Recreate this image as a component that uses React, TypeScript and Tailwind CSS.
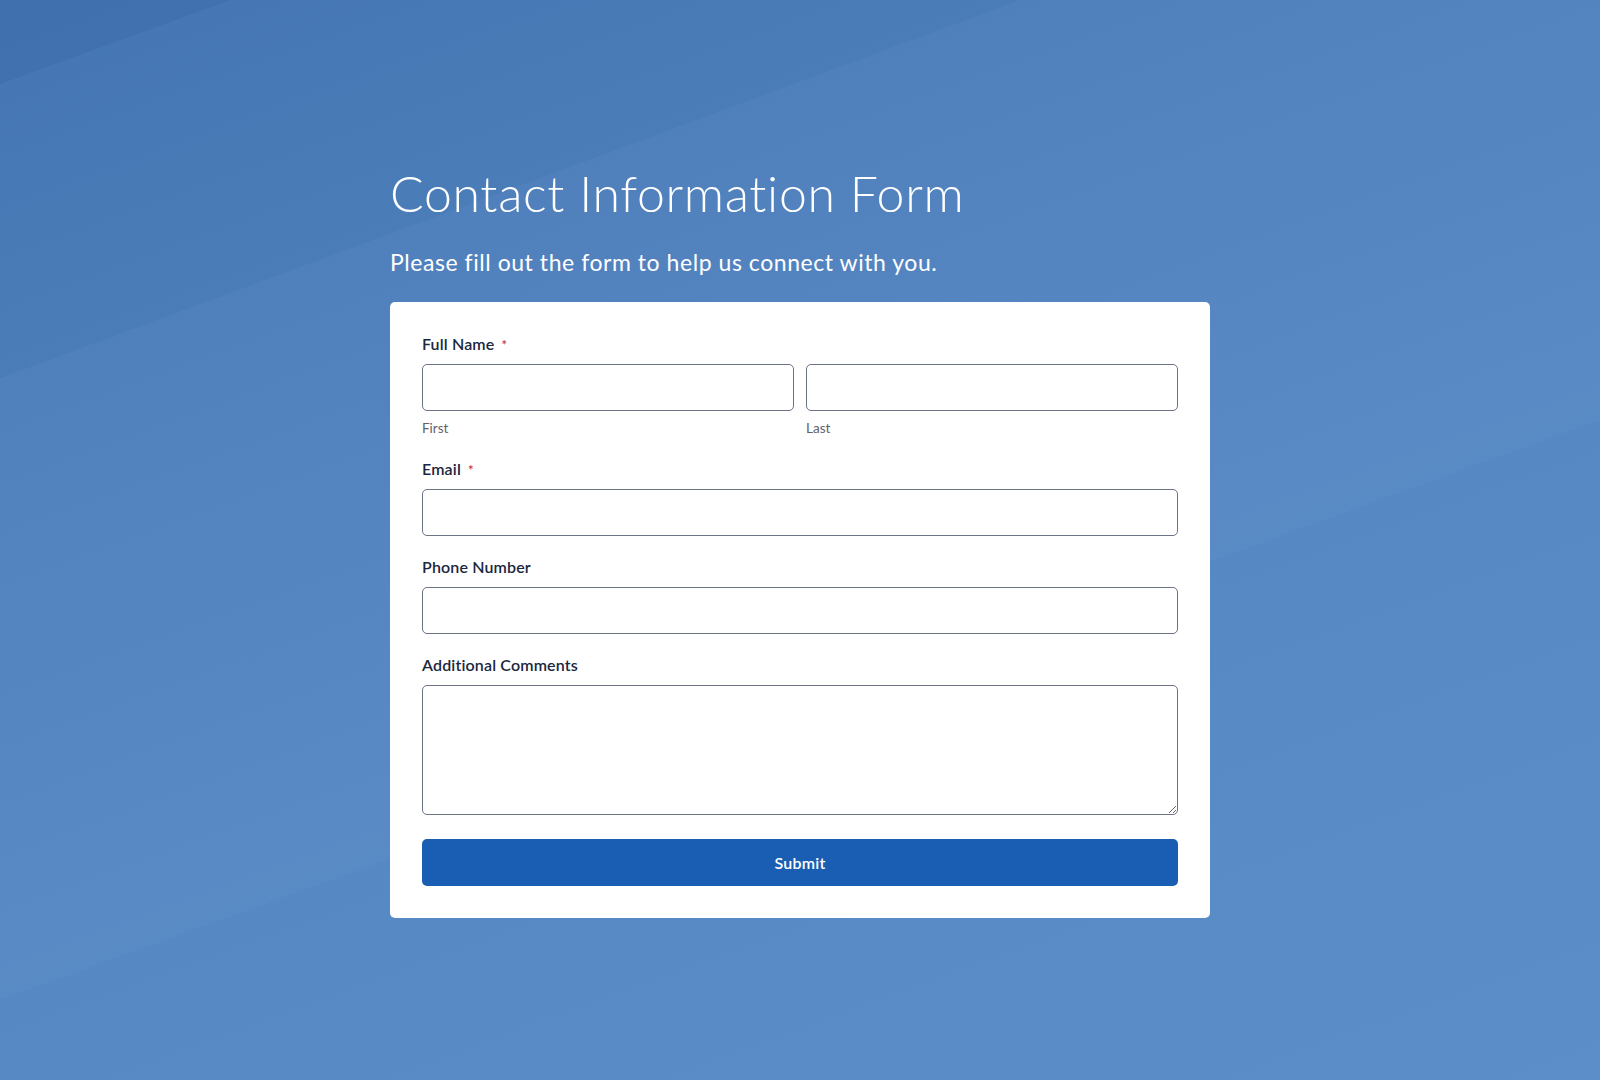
import { ReactNode } from "react";

function Label({ children, required }: { children: ReactNode; required?: boolean }) {
  return (
    <label className="flex items-center h-6 mb-2 text-[16px] font-semibold tracking-[0.15px] text-[#1b2740]">
      {children}
      {required && (
        <span className="ml-[7px] text-[13px] leading-none text-[#c23934] translate-y-[1px]">*</span>
      )}
    </label>
  );
}

const inputCls =
  "block w-full h-[47px] rounded-[5px] border border-[#6b7385] bg-white px-3 text-[15px] text-[#1b2740] outline-none focus:border-[#1b5fb4]";

function Backdrop() {
  // soft diagonal bands over the blue gradient
  return (
    <svg
      className="absolute inset-0 w-full h-full pointer-events-none"
      viewBox="0 0 1600 1080"
      preserveAspectRatio="none"
    >
      <polygon points="0,0 230,0 0,84" fill="#2f5f9c" opacity="0.3" />
      <polygon points="0,84 230,0 1020,0 0,378" fill="#2f5f9c" opacity="0.07" />
      <polygon points="0,378 1020,0 1600,0 1600,90 0,672" fill="#ffffff" opacity="0.02" />
      <polygon points="0,672 1600,90 1600,420 0,1000" fill="#ffffff" opacity="0.025" />
    </svg>
  );
}

export default function App() {
  return (
    <div
      className="relative min-h-[1080px] w-full overflow-hidden bg-[linear-gradient(160deg,#4878b5_0%,#5082bf_35%,#578ac5_65%,#5c8ec9_100%)]"
      style={{ fontFamily: "Lato, 'Open Sans', sans-serif" }}
    >
      <Backdrop />
      <div className="relative mx-auto w-[820px] pt-[162px] pb-20">
        <h1 className="text-[50px] leading-[62px] font-light text-white tracking-[0.65px]">
          Contact Information Form
        </h1>
        <p className="mt-[22px] text-[23px] leading-8 text-white tracking-[0.55px]">
          Please fill out the form to help us connect with you.
        </p>

        <form
          className="mt-6 rounded-[5px] bg-white px-8 pt-[30px] pb-8"
          onSubmit={(e) => e.preventDefault()}
        >
          {/* Full name */}
          <Label required>Full Name</Label>
          <div className="grid grid-cols-2 gap-3">
            <div>
              <input className={inputCls} />
              <div className="mt-[7px] text-[13.5px] leading-5 text-[#5f6368]">First</div>
            </div>
            <div>
              <input className={inputCls} />
              <div className="mt-[7px] text-[13.5px] leading-5 text-[#5f6368]">Last</div>
            </div>
          </div>

          <div className="mt-[19px]">
            <Label required>Email</Label>
            <input type="email" className={inputCls} />
          </div>

          <div className="mt-[19px]">
            <Label>Phone Number</Label>
            <input type="tel" className={inputCls} />
          </div>

          <div className="mt-[19px]">
            <Label>Additional Comments</Label>
            <textarea className="block w-full h-[130px] rounded-[5px] border border-[#6b7385] bg-white px-3 py-2 text-[15px] outline-none focus:border-[#1b5fb4]" />
          </div>

          <button
            type="submit"
            className="mt-6 block w-full h-[47px] rounded-[5px] bg-[#1a5eb3] text-[16px] font-semibold tracking-[0.2px] text-white"
          >
            Submit
          </button>
        </form>
      </div>
    </div>
  );
}
